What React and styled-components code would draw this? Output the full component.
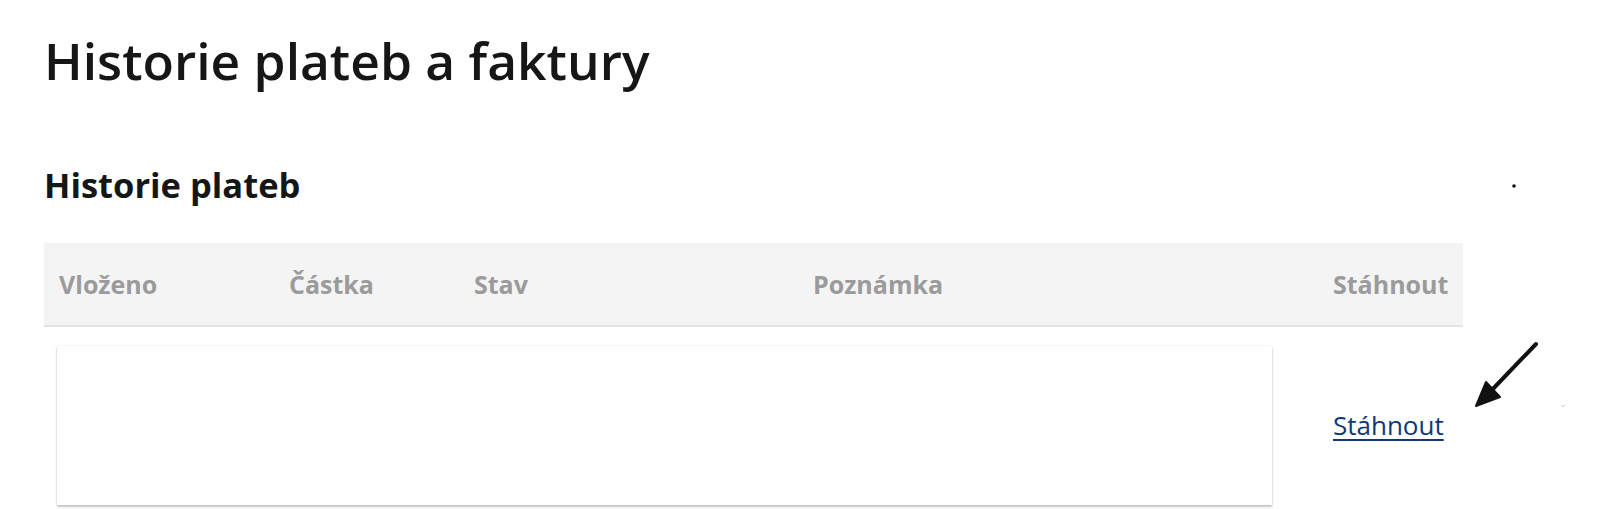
import React from "react";
import styled, { createGlobalStyle } from "styled-components";

const Global = createGlobalStyle`
  html, body { margin: 0; padding: 0; background: #fff; }
  body { font-family: "Open Sans", "Noto Sans", sans-serif; color: #161616; }
`;

const Page = styled.div`
  position: relative;
  width: 1600px;
  height: 509px;
  overflow: hidden;
  padding-left: 44px;
  box-sizing: border-box;
`;

const Title = styled.h1`
  margin: 34px 0 0;
  font-size: 51.5px;
  line-height: 52px;
  font-weight: 600;
  color: #161616;
`;

const Subtitle = styled.h2`
  margin: 81px 0 0;
  font-size: 34.5px;
  line-height: 36px;
  font-weight: 700;
  color: #161616;
`;

const Table = styled.div`
  margin-top: 40px;
  width: 1419px;
`;

const Row = styled.div`
  display: grid;
  grid-template-columns: 230px 185px 339px 1fr 145px;
  align-items: center;
  background: ${(p) => (p.$head ? "#f4f4f4" : "transparent")};
  border-bottom: ${(p) => (p.$head ? "2px solid #e4e4e4" : "none")};
`;

const HeadCell = styled.div`
  padding: 28px 0 28px 15px;
  font-size: 25px;
  line-height: 26px;
  font-weight: 700;
  color: #9b9b9b;
  white-space: nowrap;
`;

const PreviewCell = styled.div`
  grid-column: 1 / 5;
  padding: 19px 0 0 13px;
`;

const Preview = styled.div`
  width: 1215px;
  height: 159px;
  background: #fff;
  box-shadow: 0 2px 2px rgba(0, 0, 0, 0.22), 0 0 2px rgba(0, 0, 0, 0.1);
`;

const LinkCell = styled.div`
  padding-left: 15px;
  padding-top: 19px;
`;

const Link = styled.a`
  font-size: 26px;
  line-height: 26px;
  font-weight: 400;
  color: #0c3a78;
  text-decoration: underline;
  text-underline-offset: 4px;
  text-decoration-thickness: 2px;
  cursor: pointer;
`;

const Annotation = styled.svg`
  position: absolute;
  left: 0;
  top: 0;
  pointer-events: none;
`;

export default function App() {
  return (
    <>
      <Global />
      <Page>
        <Title>Historie plateb a faktury</Title>
        <Subtitle>Historie plateb</Subtitle>
        <Table>
          <Row $head>
            <HeadCell>Vloženo</HeadCell>
            <HeadCell>Částka</HeadCell>
            <HeadCell>Stav</HeadCell>
            <HeadCell>Poznámka</HeadCell>
            <HeadCell>Stáhnout</HeadCell>
          </Row>
          <Row>
            <PreviewCell>
              <Preview />
            </PreviewCell>
            <LinkCell>
              <Link>Stáhnout</Link>
            </LinkCell>
          </Row>
        </Table>
        <Annotation width="1600" height="509" viewBox="0 0 1600 509">
          <circle cx="1514" cy="186" r="1.8" fill="#111" />
          <line x1="1536" y1="344" x2="1490" y2="392" stroke="#111" strokeWidth="4" strokeLinecap="round" />
          <polygon points="1476,406 1500,397 1486,382" fill="#111" stroke="#111" strokeWidth="2" strokeLinejoin="round" />
          <path d="M1561 405 l2 2 l2 -2" stroke="#c8c8c8" strokeWidth="1" fill="none" />
        </Annotation>
      </Page>
    </>
  );
}
